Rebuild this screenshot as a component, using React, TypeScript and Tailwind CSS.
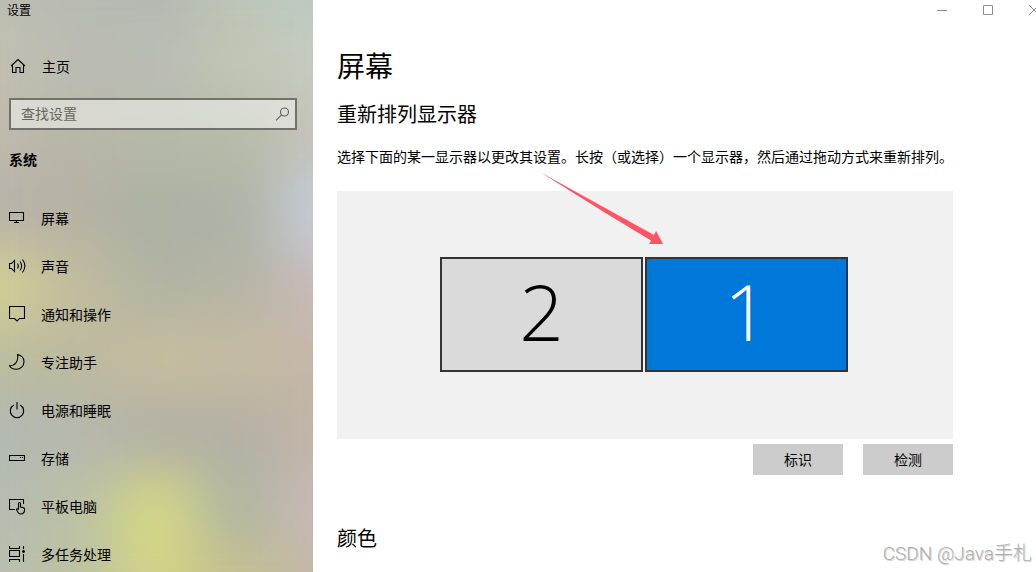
import type { ReactNode } from 'react';

interface NavItem {
  label: string;
  icon: ReactNode;
}

// Five swatches per row, blurred together behind the sidebar
const BACKDROP = [
  'bg-[#bbbdb1]', 'bg-[#b7bab1]', 'bg-[#b1b8b1]', 'bg-[#bcc5b6]', 'bg-[#bbcac4]',
  'bg-[#c3c0b1]', 'bg-[#bbbcb3]', 'bg-[#bbbdb5]', 'bg-[#c1c6b4]', 'bg-[#c8cbc2]',
  'bg-[#bebaac]', 'bg-[#b8b6a8]', 'bg-[#b5b9a8]', 'bg-[#b6bba8]', 'bg-[#c5c3ba]',
  'bg-[#b7b2aa]', 'bg-[#b6b1a4]', 'bg-[#abb1a3]', 'bg-[#adb3a6]', 'bg-[#c5cedb]',
  'bg-[#d4d292]', 'bg-[#c2bd9d]', 'bg-[#b2b3a3]', 'bg-[#b6b4a5]', 'bg-[#c9bab9]',
  'bg-[#bbbc9f]', 'bg-[#bcb99f]', 'bg-[#c6be9e]', 'bg-[#c5bca1]', 'bg-[#c4b6a8]',
  'bg-[#b1bab3]', 'bg-[#b6b8ae]', 'bg-[#b2afa6]', 'bg-[#b3b0a5]', 'bg-[#c3b5a7]',
  'bg-[#b5bbb1]', 'bg-[#bbc1a5]', 'bg-[#d5d984]', 'bg-[#b1b6a2]', 'bg-[#c9b9b8]',
  'bg-[#bbbeb0]', 'bg-[#bdc2a3]', 'bg-[#d3d387]', 'bg-[#c5c28c]', 'bg-[#c2b6a6]',
];

function Icon({ children }: { children: ReactNode }) {
  return (
    <svg
      className="h-[18px] w-[18px] shrink-0"
      viewBox="0 0 18 18"
      fill="none"
      stroke="currentColor"
      strokeWidth="1.1"
      aria-hidden="true"
    >
      {children}
    </svg>
  );
}

const NAV_ITEMS: NavItem[] = [
  {
    label: '屏幕',
    icon: <path d="M.5 3.5h14v8H.5zM7.5 11.5v2M5 13.5h5" />,
  },
  {
    label: '声音',
    icon: (
      <path d="M.5 6.5h2l3-3v11l-3-3h-2zM8.500 6.500q1.600 2.500 0 5M11 4.500q3.200 4.500 0 9M13.500 2.500q4.800 6.500 0 13" />
    ),
  },
  {
    label: '通知和操作',
    icon: <path d="M.5 1.5h15v12h-5L8 16l-2.500-2.500h-5z" />,
  },
  {
    label: '专注助手',
    icon: <path d="M8.500 1.500c4 .9 6.500 3.900 6.500 7.200a7.600 7.600 0 0 1-7.800 7.600c-3 0-5.500-1.300-6.700-3.500 5.500 0 9.300-4.300 8-11.300z" />,
  },
  {
    label: '电源和睡眠',
    icon: <path d="M8 1v7.500M5 4a6.700 6.700 0 1 0 6 0" />,
  },
  {
    label: '存储',
    icon: (
      <>
        <path d="M.5 6.500h15v5H.5z" />
        <path d="M11 8.500h1M13 8.500h1" />
      </>
    ),
  },
  {
    label: '平板电脑',
    icon: (
      <path d="M6 12.500H.5v-10h14V7M9.500 12V6.500a1 1 0 0 1 2 0V10l2.800.6c.9.2 1.300.8 1.300 1.700 0 3-1.400 4.700-3.900 4.700-2.200 0-3-1.300-4.300-4.600.6-.9 1.600-.6 2.100.4" />
    ),
  },
  {
    label: '多任务处理',
    icon: (
      <>
        <path d="M.5 1v2.500h10V1M.5 17v-2.500h10V17M.5 5.500h10v6H.5zM14.500 1v3M14.500 9v8" />
        <circle cx="14.500" cy="6.500" r="1.400" fill="currentColor" stroke="none" />
      </>
    ),
  },
];

function Sidebar() {
  return (
    <aside className="relative isolate w-[313px] shrink-0 overflow-hidden bg-[#bab9ac]">
      <div className="absolute -inset-12 -z-10 grid grid-cols-5 grid-rows-9 blur-[28px]" aria-hidden="true">
        {BACKDROP.map((color, i) => (
          <div key={i} className={color} />
        ))}
      </div>
      <p className="px-[7px] text-xs leading-5">设置</p>
      <a href="#home" className="mt-[26px] flex h-10 items-center gap-[15px] px-[9px]">
        <Icon>
          <path d="M2 9l7-6.500L16 9M3.500 7.800v7.700h3.500v-5h4v5h3.500V7.800" />
        </Icon>
        主页
      </a>
      <div className="mt-3 mr-4 ml-[9px] flex h-8 items-center border-2 border-[#72726a] bg-white/45 pr-1 pb-[3px] pl-[10px] text-[#5c5c57]">
        <input
          type="text"
          aria-label="查找设置"
          placeholder="查找设置"
          className="min-w-0 flex-1 bg-transparent outline-none placeholder:text-[#666661]"
        />
        <Icon>
          <circle cx="11.500" cy="8" r="4" />
          <path d="M8.500 10.800 3 16.300" />
        </Icon>
      </div>
      <h2 className="mt-[19px] px-[9px] leading-5 font-bold">系统</h2>
      <nav className="mt-[25px]">
        {NAV_ITEMS.map((item) => (
          <a key={item.label} href="#settings" className="flex h-12 items-center gap-[14px] px-[9px]">
            <Icon>{item.icon}</Icon>
            {item.label}
          </a>
        ))}
      </nav>
    </aside>
  );
}

function WindowControls() {
  return (
    <div className="absolute top-0 -right-[21px] flex text-[#8f8f8f]">
      <button type="button" aria-label="最小化" className="flex h-5 w-[46px] items-center justify-center">
        <svg className="h-[10px] w-[10px]" viewBox="0 0 10 10" stroke="currentColor">
          <path d="M0 5.500h10" />
        </svg>
      </button>
      <button type="button" aria-label="最大化" className="flex h-5 w-[46px] items-center justify-center">
        <svg className="h-[10px] w-[10px]" viewBox="0 0 10 10" fill="none" stroke="currentColor">
          <path d="M.5.5h9v9h-9z" />
        </svg>
      </button>
      <button type="button" aria-label="关闭" className="flex h-5 w-[46px] items-center justify-center">
        <svg className="h-[10px] w-[10px]" viewBox="0 0 10 10" stroke="currentColor">
          <path d="M0 0l10 10M10 0L0 10" />
        </svg>
      </button>
    </div>
  );
}

function DisplayArranger() {
  return (
    <div className="relative mt-6 flex h-[248px] items-center justify-center gap-[2px] bg-[#f1f1f1] pr-[2px] pb-[2px]">
      <button
        type="button"
        className="h-[115px] w-[203px] border-2 border-[#333] bg-[#dadada] pb-[6px] font-['Open_Sans',sans-serif] text-[78px] leading-none font-light"
      >
        2
      </button>
      <button
        type="button"
        className="h-[115px] w-[203px] border-2 border-[#333] bg-[#0078d9] pb-[6px] font-['Open_Sans',sans-serif] text-[78px] leading-none font-light text-white"
      >
        1
      </button>
      {/* Pointer towards the selected display */}
      <svg
        className="pointer-events-none absolute -top-[19px] left-[202px] h-[73px] w-[125px]"
        viewBox="0 0 125 73"
        fill="#ff5464"
        aria-hidden="true"
      >
        <path d="M1 0 115 63 117 59 124 72H110L112 68.500 68 42z" />
      </svg>
    </div>
  );
}

export default function App() {
  return (
    <div className="relative flex h-screen overflow-hidden bg-white font-['Noto_Sans_CJK_SC',sans-serif] text-sm text-black">
      <Sidebar />
      <main className="min-w-0 flex-1 px-6 pt-[45px]">
        <div className="max-w-[616px]">
          <h1 className="text-[28px] leading-10">屏幕</h1>
          <h2 className="mt-[13px] text-xl leading-8">重新排列显示器</h2>
          <p className="mt-4 mb-[25px] leading-5 whitespace-nowrap">
            选择下面的某一显示器以更改其设置。长按（或选择）一个显示器，然后通过拖动方式来重新排列。
          </p>
          <DisplayArranger />
          <div className="mt-[5px] flex justify-end gap-5">
            <button type="button" className="h-[31px] w-[90px] bg-[#ccc] pb-[2px]">
              标识
            </button>
            <button type="button" className="h-[31px] w-[90px] bg-[#ccc] pb-[2px]">
              检测
            </button>
          </div>
          <h2 className="mt-[47px] text-xl leading-8">颜色</h2>
        </div>
      </main>
      <WindowControls />
      <p className="absolute right-1 bottom-1 font-[Roboto,'Noto_Sans_CJK_SC',sans-serif] text-[19px] leading-7 font-light text-[#b0b0b0] [text-shadow:1px_1px_1px_#ccc]">
        CSDN @Java手札
      </p>
    </div>
  );
}
